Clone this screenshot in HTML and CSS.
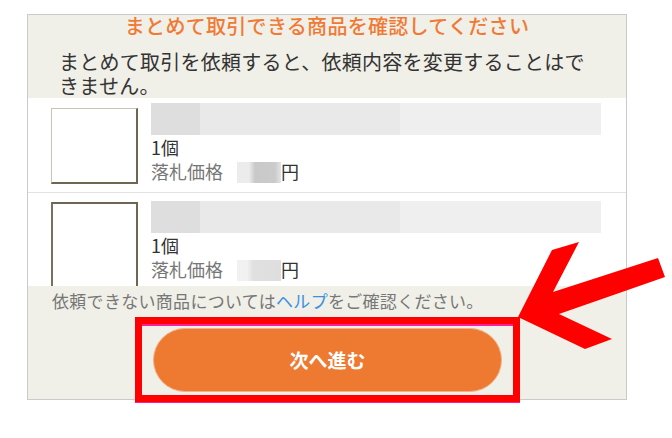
FILE: index.html
```html
<!DOCTYPE html>
<html lang="ja">
<head>
    <meta charset="UTF-8">
    <meta name="viewport" content="width=device-width, initial-scale=1.0">
    <title>まとめて取引</title>
    <link rel="stylesheet" href="styles.css">
</head>
<body>
    <div class="panel">
        <div class="panel-head">
            <h2 class="panel-title">まとめて取引できる商品を確認してください</h2>
            <p class="panel-lead">まとめて取引を依頼すると、依頼内容を変更することはできません。</p>
        </div>

        <!-- 商品一覧 -->
        <div class="item-list">
            <div class="item-row">
                <div class="item-thumb"></div>
                <div class="item-info">
                    <div class="item-name"></div>
                    <div class="item-qty">1個</div>
                    <div class="item-price">落札価格<span class="price-blur"></span><span class="yen">円</span></div>
                </div>
            </div>
            <div class="item-row">
                <div class="item-thumb item-thumb--dark"></div>
                <div class="item-info">
                    <div class="item-name"></div>
                    <div class="item-qty">1個</div>
                    <div class="item-price">落札価格<span class="price-blur price-blur--light"></span><span class="yen">円</span></div>
                </div>
            </div>
        </div>

        <div class="panel-foot">
            <p class="foot-note">依頼できない商品については<a class="help-link" href="#">ヘルプ</a>をご確認ください。</p>
            <div class="mark-box">
                <button class="next-btn">次へ進む</button>
            </div>
        </div>
    </div>

    <svg class="arrow" width="672" height="438" viewBox="0 0 672 438">
        <polygon points="518,317 552,250 579,242 553,292 658,258 665,277 559,314 612,339 585,349" fill="#ff0000"/>
    </svg>
</body>
</html>
```

FILE: styles.css
```css
body {
    margin: 0;
    background: #fff;
    font-family: "Noto Sans CJK JP", "Noto Sans", sans-serif;
    position: relative;
    width: 672px;
    height: 438px;
    overflow: hidden;
}

.panel {
    margin: 14px 0 0 27px;
    width: 600px;
    box-sizing: border-box;
    border: 1px solid #cacaca;
    background: #f0efe8;
}

.panel-head {
    height: 83px;
}

.panel-title {
    margin: 0;
    font-size: 20px;
    line-height: 22px;
    font-weight: 500;
    letter-spacing: 0.3px;
    color: #f07a34;
    text-align: center;
}

.panel-lead {
    margin: 13px 0 0;
    padding: 0 30px 0 31px;
    font-size: 20px;
    line-height: 24px;
    letter-spacing: 0.25px;
    color: #333;
}

.item-list {
    height: 188px;
    overflow: hidden;
    background: #fff;
}

.item-row {
    display: flex;
    padding: 5px 0 8px 23px;
    border-bottom: 1px solid #e3e3e3;
}

.item-row + .item-row {
    padding-top: 8px;
}

.item-thumb {
    width: 87px;
    height: 76px;
    margin-top: 5px;
    box-sizing: border-box;
    border: 1px solid #c9c3b8;
    border-right: 2px solid #6f6553;
    border-bottom: 2px solid #6f6553;
    background: #fff;
    flex-shrink: 0;
}

.item-thumb--dark {
    margin-top: 1px;
    height: 84px;
    border-top: 2px solid #6f6553;
    border-left: 2px solid #7a705e;
    border-bottom: 0;
}

.item-info {
    flex: 1;
    margin: 0 25px 0 13px;
}

.item-name {
    height: 32px;
    background: linear-gradient(to right, #dedede 0 49px, #e9e9e9 49px 249px, #efefef 249px);
}

.item-qty,
.item-price {
    font-size: 18px;
    line-height: 24px;
    color: #333;
}

.item-price {
    color: #777;
}

.price-blur {
    display: inline-block;
    width: 44px;
    height: 21px;
    margin-left: 14px;
    vertical-align: -4px;
    background: linear-gradient(to right, #ececec 0 12px, #c9c9c9 18px, #cbcbcb 38px, #e4e4e4);
}

.price-blur--light {
    background: linear-gradient(to right, #f1f1f1 0 10px, #e0e0e0 16px, #dedede 44px);
}

.yen {
    color: #333;
}

.panel-foot {
    padding-top: 3px;
    height: 113px;
    box-sizing: border-box;
}

.foot-note {
    margin: 0;
    padding-left: 24px;
    font-size: 17px;
    line-height: 24px;
    letter-spacing: 0.3px;
    color: #777;
}

.help-link {
    color: #3b8fe3;
    text-decoration: none;
}

.mark-box {
    margin: 4px 0 0 107px;
    width: 385px;
    height: 85px;
    box-sizing: border-box;
    border: 7px solid #ff0000;
    box-shadow: inset 0 2px 0 #ff1e9a, 0 1px 0 #ff1e9a;
    display: flex;
    align-items: center;
    justify-content: center;
}

.next-btn {
    width: 349px;
    height: 64px;
    border: 1px solid #f3b08a;
    border-radius: 32px;
    background: #ee7a31;
    color: #fff;
    font-family: inherit;
    font-size: 19px;
    font-weight: 700;
    cursor: pointer;
}

.arrow {
    position: absolute;
    left: 0;
    top: 0;
    pointer-events: none;
}
```
